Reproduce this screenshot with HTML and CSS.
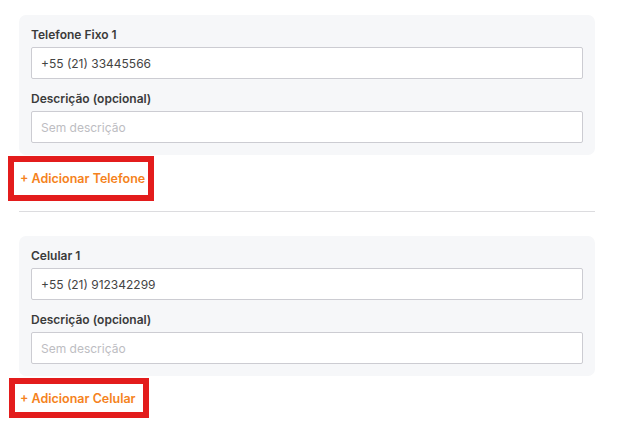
FILE: index.html
```html
<!DOCTYPE html>
<html lang="pt-BR">

<head>
    <meta charset="UTF-8">
    <meta name="viewport" content="width=device-width, initial-scale=1.0">
    <title>Telefones</title>
    <link rel="stylesheet" href="styles.css">
</head>

<body>
    <div class="contacts">
        <!-- Telefones fixos -->
        <div class="phone-card">
            <label class="field-label" for="fixo1">Telefone Fixo 1</label>
            <input class="field-input" type="text" id="fixo1" value="+55 (21) 33445566" />

            <label class="field-label field-label--gap" for="fixo1desc">Descrição (opcional)</label>
            <input class="field-input" type="text" id="fixo1desc" placeholder="Sem descrição" />
        </div>
        <button class="add-link add-link--phone" type="button">+ Adicionar Telefone</button>

        <hr class="divider" />

        <!-- Celulares -->
        <div class="phone-card">
            <label class="field-label" for="cel1">Celular 1</label>
            <input class="field-input" type="text" id="cel1" value="+55 (21) 912342299" />

            <label class="field-label field-label--gap" for="cel1desc">Descrição (opcional)</label>
            <input class="field-input" type="text" id="cel1desc" placeholder="Sem descrição" />
        </div>
        <button class="add-link add-link--mobile" type="button">+ Adicionar Celular</button>
    </div>
</body>

</html>
```

FILE: styles.css
```css
body {
    font-family: Inter, 'Noto Sans', sans-serif;
    background-color: #fff;
    margin: 0;
}

.contacts {
    width: 576px;
    padding: 15px 0 0 19px;
}

.phone-card {
    background-color: #f6f7f9;
    border-radius: 7px;
    padding: 12px;
    display: flex;
    flex-direction: column;
}

.field-label {
    display: block;
    font-size: 12px;
    font-weight: 600;
    color: #3b3b3b;
    line-height: 16px;
    margin-bottom: 4px;
}

.field-label--gap {
    margin-top: 12px;
}

.field-input {
    height: 32px;
    box-sizing: border-box;
    border: 1px solid #ccccd2;
    border-radius: 2px;
    background-color: #fff;
    padding: 0 9px;
    font-family: inherit;
    font-size: 12px;
    color: #444;
    outline: none;
}

.field-input::placeholder {
    color: #bdbdc2;
}

.add-link {
    display: block;
    background-color: #fff;
    border: 6px solid #e31c1c;
    font-family: inherit;
    font-size: 12.5px;
    font-weight: 600;
    color: #f58220;
    text-align: left;
    cursor: pointer;
}

.add-link--phone {
    margin: 1px 0 0 -11px;
    width: 146px;
    height: 45px;
    padding: 0 0 0 6px;
}

.add-link--mobile {
    margin: 2px 0 0 -10px;
    width: 140px;
    height: 40px;
    padding: 0 0 0 5px;
}

.divider {
    border: none;
    border-top: 1px solid #dcdcdf;
    margin: 10px 0 24px;
}
```
